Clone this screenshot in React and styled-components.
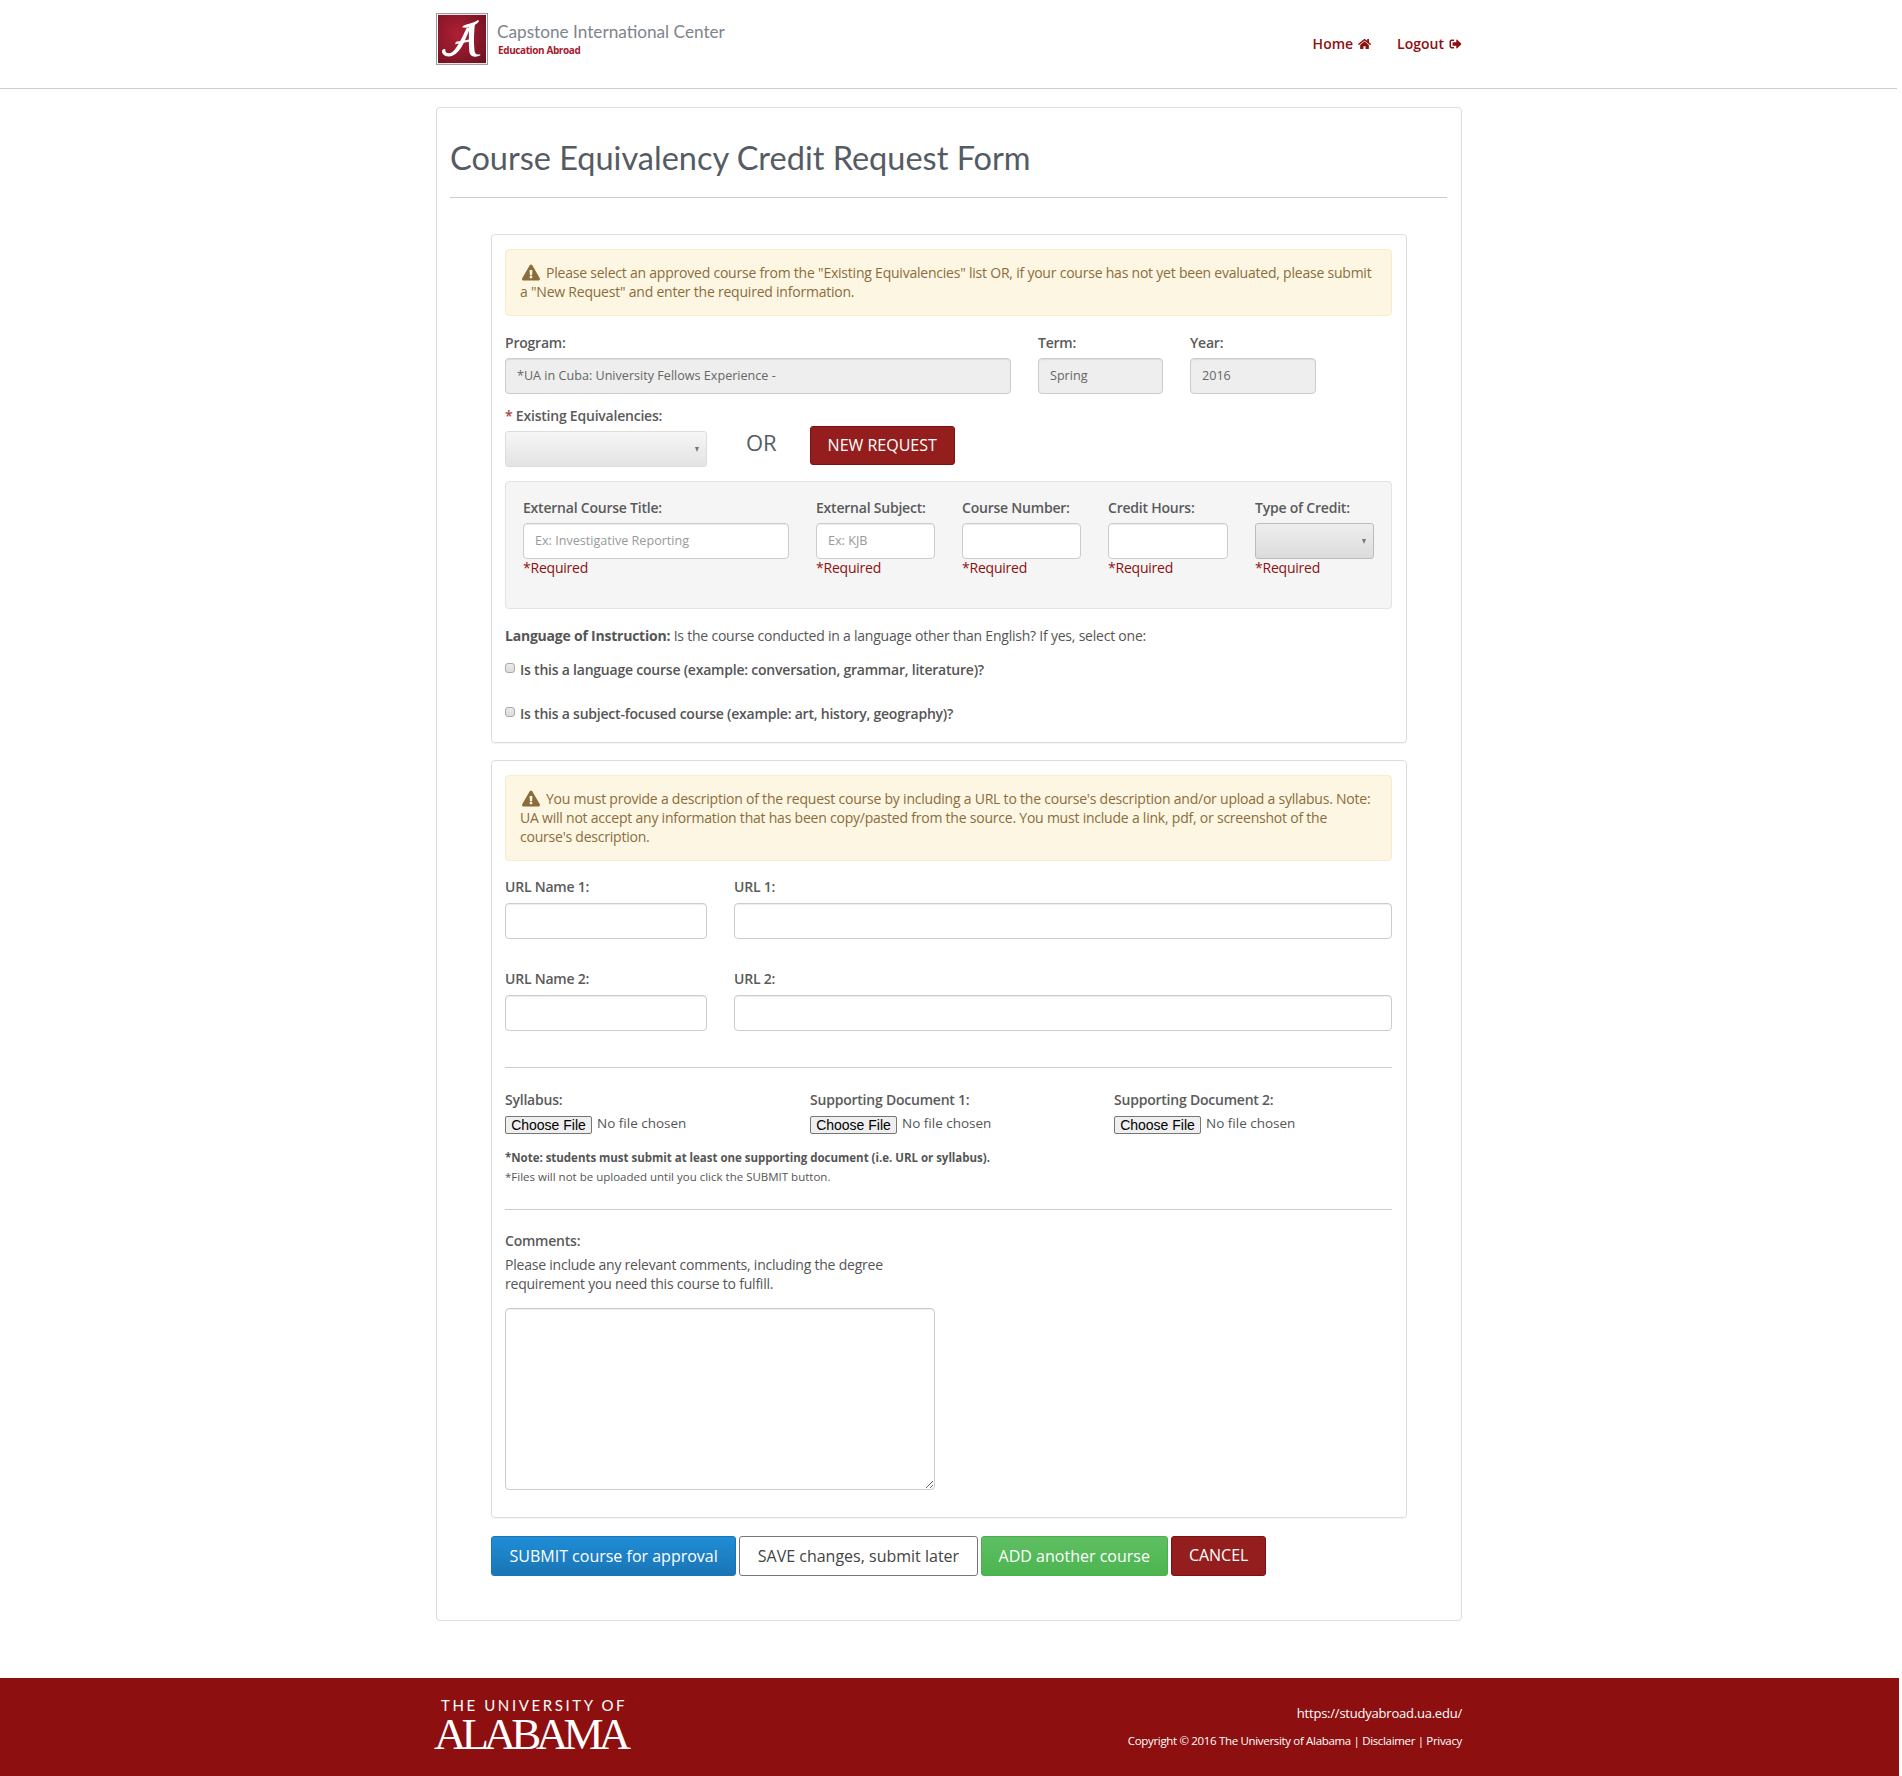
// App.jsx - Course Equivalency Credit Request Form
import React from "react";
import styled, { createGlobalStyle } from "styled-components";
import { FaHome, FaSignOutAlt, FaExclamationTriangle } from "react-icons/fa";

const GlobalStyle = createGlobalStyle`
html, body {
  margin: 0;
  padding: 0;
  background: #fff;
}
body {
  font-family: "Open Sans", "Liberation Sans", sans-serif;
  font-size: 14px;
  letter-spacing: -0.22px;
  color: #555;
}
* {
  box-sizing: border-box;
}
`;

const Page = styled.div`
width: 1899px;
`;

const Container = styled.div`
width: 1026px;
margin-left: 436px;
`;

const Header = styled.header`
height: 89px;
width: 1897px;
border-bottom: 1px solid #ccc;
`;

const HeaderInner = styled(Container)`
display: flex;
justify-content: space-between;
padding-top: 13px;
`;

const Brand = styled.div`
display: flex;
gap: 9px;
`;

const BrandText = styled.div`
padding-top: 7px;
`;

const BrandName = styled.div`
font-family: Lato, sans-serif;
font-size: 17.2px;
line-height: 24px;
letter-spacing: 0;
color: #7d858c;
`;

const BrandSub = styled.div`
font-size: 10px;
line-height: 12px;
font-weight: 700;
letter-spacing: -0.4px;
color: #a6192e;
margin-left: 1px;
`;

const Nav = styled.nav`
display: flex;
gap: 26px;
padding-top: 9px;
`;

const NavLink = styled.a`
display: flex;
align-items: center;
gap: 5px;
font-size: 14px;
font-weight: 600;
line-height: 20px;
letter-spacing: 0;
color: #8e0f0f;
svg {
  width: 13px;
  height: 12px;
}
`;

const Panel = styled(Container)`
margin-top: 18px;
padding: 0 14px 44px 13px;
border: 1px solid #ddd;
border-radius: 4px;
`;

const Title = styled.h1`
margin: 0;
padding-top: 29px;
height: 90px;
border-bottom: 1px solid #ccc;
font-family: Lato, sans-serif;
font-size: 32.5px;
line-height: 42px;
font-weight: 400;
letter-spacing: 0;
color: #555b63;
`;

const Well = styled.section`
margin: ${(p) => p.$top}px 40px 0 41px;
padding: 14px 14px ${(p) => p.$bottom}px 13px;
border: 1px solid #ddd;
border-radius: 4px;
box-shadow: 0 1px 1px rgba(0, 0, 0, 0.05);
`;

const Alert = styled.div`
padding: 13px 14px 14px;
background: #fdf6e3;
border: 1px solid #faebcc;
border-radius: 4px;
color: #8a6d3b;
line-height: 19px;
font-size: 14px;
svg {
  width: 18px;
  height: 17px;
  margin: 0 6px -3px 2px;
}
`;

const Label = styled.label`
display: block;
height: 20px;
line-height: 20px;
margin-bottom: ${(p) => p.$gap ?? 5}px;
font-weight: 600;
color: #5a5a5a;
white-space: nowrap;
`;

const Required = styled.span`
color: #a94442;
`;

const Row = styled.div`
display: flex;
gap: ${(p) => p.$gap ?? 27}px;
margin-top: ${(p) => p.$top ?? 0}px;
`;

const Field = styled.div`
width: ${(p) => p.$width}px;
flex: ${(p) => (p.$width ? "none" : "1")};
`;

const Input = styled.input`
display: block;
width: 100%;
height: 36px;
padding: 0 11px 2px;
background: ${(p) => (p.disabled ? "#eee" : "#fff")};
border: 1px solid #ccc;
border-radius: 4px;
box-shadow: inset 0 1px 1px rgba(0, 0, 0, 0.075);
font-family: inherit;
font-size: 12.6px;
color: #666;
&::placeholder {
  color: #999;
  opacity: 1;
}
`;

const SelectWrap = styled.div`
position: relative;
width: 100%;
&::after {
  content: "";
  position: absolute;
  right: 8px;
  top: 16px;
  border-left: 2.5px solid transparent;
  border-right: 2.5px solid transparent;
  border-top: 5px solid #777;
}
`;

const Select = styled.select`
display: block;
width: 100%;
height: 36px;
appearance: none;
background: ${(p) =>
  p.$dark
    ? "linear-gradient(to bottom, #eee, #dcdcdc)"
    : "linear-gradient(to bottom, #f6f6f6, #e3e3e3)"};
border: 1px solid ${(p) => (p.$dark ? "#bbb" : "#ddd")};
border-radius: 3px;
`;

const RequestRow = styled.div`
display: flex;
margin-top: 12px;
`;

const OrText = styled.div`
margin: 0 33px 0 39px;
padding-top: 20px;
font-size: 22px;
line-height: 32px;
letter-spacing: 0;
color: #555b63;
`;

const NewRequest = styled.button`
align-self: flex-start;
margin-top: 20px;
width: 145px;
height: 39px;
padding: 0 0 2px;
background: #941e1e;
border: 1px solid #7c1212;
border-radius: 3px;
color: #fff;
font-family: inherit;
font-size: 16px;
`;

const GrayWell = styled.div`
display: flex;
gap: 27px;
height: 128px;
margin-top: 14px;
padding: 16px 17px 0;
background: #f5f5f5;
border: 1px solid #e3e3e3;
border-radius: 4px;
`;

const RequiredNote = styled.div`
line-height: 17px;
color: #8e0f0f;
`;

const LanguageText = styled.p`
margin: 17px 0 0;
line-height: 20px;
strong {
  font-weight: 700;
}
`;

const CheckRow = styled.label`
display: flex;
align-items: center;
height: 20px;
margin-top: ${(p) => p.$top}px;
font-weight: 600;
input {
  appearance: none;
  width: 10px;
  height: 10px;
  margin: -2px 5px 0 0;
  background: linear-gradient(to bottom, #eaeaea, #dcdcdc);
  border: 1px solid #a8a8a8;
  border-radius: 3px;
}
`;

const Divider = styled.hr`
margin: ${(p) => p.$top}px 0 ${(p) => p.$bottom}px;
border: 0;
border-top: 1px solid #ccc;
`;

const FileColumns = styled.div`
display: grid;
grid-template-columns: 305px 304px 1fr;
`;

const FileInput = styled.input`
display: block;
height: 18px;
width: 280px;
font-family: "Open Sans", sans-serif;
font-size: 13.5px;
line-height: 14px;
color: #555;
&::file-selector-button {
  height: 18px;
  width: 87px;
  margin: 0 5px 0 0;
  padding: 0;
  vertical-align: -2px;
  font-family: "Liberation Sans", sans-serif;
  font-size: 14px;
  color: #000;
  background: #efefef;
  border: 1px solid #767676;
  border-radius: 2px;
}
`;

const NoteBold = styled.div`
margin-top: 16px;
font-size: 11.5px;
line-height: 16px;
font-weight: 700;
letter-spacing: -0.02px;
`;

const NoteSmall = styled.div`
margin-top: 3px;
font-size: 11.5px;
line-height: 16px;
letter-spacing: 0;
`;

const CommentText = styled.p`
width: 440px;
margin: 0 0 15px;
line-height: 19px;
`;

const Comments = styled.textarea`
display: block;
width: 430px;
height: 182px;
background: #fff;
border: 1px solid #ccc;
border-radius: 4px;
box-shadow: inset 0 1px 1px rgba(0, 0, 0, 0.075);
`;

const Actions = styled.div`
display: flex;
gap: 3px;
margin: 18px 40px 0 41px;
`;

const ActionButton = styled.button`
height: 40px;
padding: 0 ${(p) => p.$pad}px ${(p) => p.$lift ?? 0}px;
border: 1px solid ${(p) => p.$border};
border-radius: 3px;
background: ${(p) => p.$bg};
color: ${(p) => p.$color ?? "#fff"};
font-family: inherit;
font-size: 16px;
white-space: nowrap;
`;

const Footer = styled.footer`
height: 98px;
margin-top: 57px;
background: #8e0f0f;
`;

const FooterInner = styled(Container)`
display: flex;
justify-content: space-between;
`;

const Uni = styled.div`
padding-top: 18px;
color: #fff;
`;

const UniTop = styled.div`
margin-left: 5px;
font-family: Lato, sans-serif;
font-size: 15px;
line-height: 18px;
letter-spacing: 2.6px;
`;

const UniName = styled.div`
margin-left: -2px;
font-family: "Liberation Serif", serif;
font-size: 45px;
line-height: 40px;
letter-spacing: -5.1px;
`;

const FooterRight = styled.div`
padding-top: 25px;
text-align: right;
color: #fff;
`;

const FooterUrl = styled.div`
font-size: 13px;
line-height: 20px;
`;

const Copyright = styled.div`
margin-top: 9px;
font-size: 11.5px;
line-height: 18px;
letter-spacing: -0.33px;
`;

// 크림슨 스크립트 A 로고
function Logo() {
  return (
    <svg width="52" height="52" viewBox="0 0 52 55" preserveAspectRatio="none">
      <defs>
        <radialGradient id="crimson" cx="0.4" cy="0.4" r="0.8">
          <stop offset="0" stopColor="#b01f35" />
          <stop offset="1" stopColor="#6d1220" />
        </radialGradient>
      </defs>
      <rect x="0.5" y="0.5" width="51" height="54" fill="#fff" stroke="#999" />
      <rect x="2" y="2" width="48" height="51" fill="url(#crimson)" />
      <g fill="#fff">
        <path d="M26 15C29 11 37 12 42 7.5L43 8.5C41 13 33 15.5 29.5 15.5Z" />
        <path d="M33 12L39 10.5C38 20 37.5 30 38.5 40C39 43.5 41 44.5 44 43.5L44.5 44.5C41 47 34.5 47 33.5 42C32.5 34 33 22 33 12Z" />
        <path d="M31 15L34 16C30 26 26 40 17 45C13 47 7.5 46 6 41.5C5.5 39 8 37.5 9.5 38.5C9 40 9.5 42 12.5 42.5C19 43 25 28 31 15Z" />
        <path d="M20 30.5L36 27.5L36 30L19 33Z" />
      </g>
    </svg>
  );
}

const required_cols = [
  { label: "External Course Title:", width: 266, placeholder: "Ex: Investigative Reporting" },
  { label: "External Subject:", width: 119, placeholder: "Ex: KJB" },
  { label: "Course Number:", width: 119 },
  { label: "Credit Hours:", width: 120 },
];

const file_cols = ["Syllabus:", "Supporting Document 1:", "Supporting Document 2:"];

function App() {
  return (
    <Page>
      <GlobalStyle />
      <Header>
        <HeaderInner>
          <Brand>
            <Logo />
            <BrandText>
              <BrandName>Capstone International Center</BrandName>
              <BrandSub>Education Abroad</BrandSub>
            </BrandText>
          </Brand>
          <Nav>
            <NavLink>Home <FaHome /></NavLink>
            <NavLink>Logout <FaSignOutAlt /></NavLink>
          </Nav>
        </HeaderInner>
      </Header>

      <Panel>
        <Title>Course Equivalency Credit Request Form</Title>

        <Well $top={36} $bottom={19}>
          <Alert>
            <FaExclamationTriangle />
            Please select an approved course from the "Existing Equivalencies" list OR, if your course has not yet been evaluated, please submit a "New Request" and enter the required information.
          </Alert>
          <Row $top={17}>
            <Field $width={506}>
              <Label>Program:</Label>
              <Input disabled value="*UA in Cuba: University Fellows Experience -" readOnly />
            </Field>
            <Field $width={125}>
              <Label>Term:</Label>
              <Input disabled value="Spring" readOnly />
            </Field>
            <Field $width={126}>
              <Label>Year:</Label>
              <Input disabled value="2016" readOnly />
            </Field>
          </Row>
          <RequestRow>
            <Field $width={202}>
              <Label><Required>*</Required> Existing Equivalencies:</Label>
              <SelectWrap><Select /></SelectWrap>
            </Field>
            <OrText>OR</OrText>
            <NewRequest>NEW REQUEST</NewRequest>
          </RequestRow>
          <GrayWell>
            {required_cols.map((col) => (
              <Field $width={col.width} key={col.label}>
                <Label>{col.label}</Label>
                <Input placeholder={col.placeholder} />
                <RequiredNote>*Required</RequiredNote>
              </Field>
            ))}
            <Field $width={119}>
              <Label>Type of Credit:</Label>
              <SelectWrap><Select $dark /></SelectWrap>
              <RequiredNote>*Required</RequiredNote>
            </Field>
          </GrayWell>
          <LanguageText>
            <strong>Language of Instruction:</strong> Is the course conducted in a language other than English? If yes, select one:
          </LanguageText>
          <CheckRow $top={13}>
            <input type="checkbox" />
            Is this a language course (example: conversation, grammar, literature)?
          </CheckRow>
          <CheckRow $top={24}>
            <input type="checkbox" />
            Is this a subject-focused course (example: art, history, geography)?
          </CheckRow>
        </Well>

        <Well $top={17} $bottom={27}>
          <Alert>
            <FaExclamationTriangle />
            You must provide a description of the request course by including a URL to the course's description and/or upload a syllabus. Note: UA will not accept any information that has been copy/pasted from the source. You must include a link, pdf, or screenshot of the course's description.
          </Alert>
          <Row $top={16}>
            <Field $width={202}>
              <Label $gap={6}>URL Name 1:</Label>
              <Input />
            </Field>
            <Field>
              <Label $gap={6}>URL 1:</Label>
              <Input />
            </Field>
          </Row>
          <Row $top={30}>
            <Field $width={202}>
              <Label $gap={6}>URL Name 2:</Label>
              <Input />
            </Field>
            <Field>
              <Label $gap={6}>URL 2:</Label>
              <Input />
            </Field>
          </Row>
          <Divider $top={36} $bottom={22} />
          <FileColumns>
            {file_cols.map((name) => (
              <div key={name}>
                <Label $gap={6}>{name}</Label>
                <FileInput type="file" />
              </div>
            ))}
          </FileColumns>
          <NoteBold>*Note: students must submit at least one supporting document (i.e. URL or syllabus).</NoteBold>
          <NoteSmall>*Files will not be uploaded until you click the SUBMIT button.</NoteSmall>
          <Divider $top={24} $bottom={21} />
          <Label $gap={4}>Comments:</Label>
          <CommentText>Please include any relevant comments, including the degree requirement you need this course to fulfill.</CommentText>
          <Comments />
        </Well>

        <Actions>
          <ActionButton $pad={17.5} $bg="linear-gradient(to bottom, #1f8dd6, #1a75b5)" $border="#1a75b5">SUBMIT course for approval</ActionButton>
          <ActionButton $pad={17.5} $bg="#fff" $border="#777" $color="#444">SAVE changes, submit later</ActionButton>
          <ActionButton $pad={17} $bg="linear-gradient(to bottom, #5fbf63, #4bb54f)" $border="#4cae4c">ADD another course</ActionButton>
          <ActionButton $pad={17} $bg="#941e1e" $border="#7c1212" $lift={3}>CANCEL</ActionButton>
        </Actions>
      </Panel>

      <Footer>
        <FooterInner>
          <Uni>
            <UniTop>THE UNIVERSITY OF</UniTop>
            <UniName>ALABAMA</UniName>
          </Uni>
          <FooterRight>
            <FooterUrl>https://studyabroad.ua.edu/</FooterUrl>
            <Copyright>Copyright © 2016 The University of Alabama | Disclaimer | Privacy</Copyright>
          </FooterRight>
        </FooterInner>
      </Footer>
    </Page>
  );
}

export default App;
